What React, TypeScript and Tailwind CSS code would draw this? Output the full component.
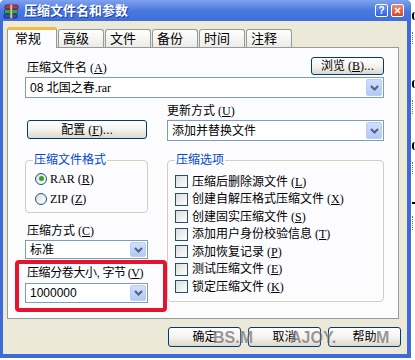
import type { ReactNode } from "react";

// mnemonic key like (A) with underlined letter
function Mn({ k, tight }: { k: string; tight?: boolean }) {
  return (
    <span className={`${tight ? "ml-[2px]" : "ml-[3px]"} font-['Liberation_Serif',serif]`}>
      (<u>{k}</u>)
    </span>
  );
}

function XpButton({ className, children }: { className?: string; children: ReactNode }) {
  return (
    <div
      className={`flex items-center justify-center rounded-[3px] border border-[#003c74] bg-gradient-to-b from-white via-[#f4f3ee] to-[#dcd8cc] text-[12px] leading-[14px] text-black ${className ?? ""}`}
    >
      {children}
    </div>
  );
}

function Combo({ className, children }: { className?: string; children: ReactNode }) {
  return (
    <div className={`flex items-center border border-[#7f9db9] bg-white p-px ${className ?? ""}`}>
      <div className="flex-1 truncate pl-[3px] text-[12px] leading-[14px]">{children}</div>
      <div className="flex h-full w-[16px] items-center justify-center rounded-[2px] border border-[#b9cdf6] bg-gradient-to-b from-[#d2defc] to-[#b4c8f5]">
        <svg width="9" height="6" viewBox="0 0 9 6">
          <path d="M1 1 L4.5 4.5 L8 1" fill="none" stroke="#4d6185" strokeWidth="2" />
        </svg>
      </div>
    </div>
  );
}

function Check({ children }: { children: ReactNode }) {
  return (
    <div className="flex h-[13px] items-center gap-[4px]">
      <div className="h-[13px] w-[13px] shrink-0 border border-[#1c5180] bg-gradient-to-br from-[#dcdcd7] to-white" />
      <span className="whitespace-nowrap text-[12px] leading-[14px]">{children}</span>
    </div>
  );
}

function Radio({ checked, children }: { checked?: boolean; children: ReactNode }) {
  return (
    <div className="flex h-[13px] items-center gap-[3px]">
      <div className="flex h-[12px] w-[12px] items-center justify-center rounded-full border border-[#1c5180] bg-gradient-to-br from-[#dcdcd7] to-white">
        {checked && <div className="h-[5px] w-[5px] rounded-full bg-[#2fa72f]" />}
      </div>
      <span className="whitespace-nowrap text-[12px] leading-[14px]">{children}</span>
    </div>
  );
}

function WinRarIcon() {
  return (
    <svg width="16" height="16" viewBox="0 0 16 16">
      <rect x="1" y="11" width="13" height="4" rx="1" fill="#2a52c8" stroke="#0c2270" strokeWidth="0.8" />
      <rect x="1.5" y="6.5" width="13" height="4" rx="1" fill="#2aa852" stroke="#0d5a23" strokeWidth="0.8" />
      <rect x="2" y="2" width="13" height="4" rx="1" fill="#b8327a" stroke="#5e1040" strokeWidth="0.8" />
      <rect x="7" y="1" width="2.5" height="14.5" fill="#d8c08a" stroke="#6d5a2e" strokeWidth="0.6" />
    </svg>
  );
}

const tabs = ["高级", "文件", "备份", "时间", "注释"];

const options: [string, string][] = [
  ["压缩后删除源文件", "L"],
  ["创建自解压格式压缩文件", "X"],
  ["创建固实压缩文件", "S"],
  ["添加用户身份校验信息", "T"],
  ["添加恢复记录", "P"],
  ["测试压缩文件", "E"],
  ["锁定压缩文件", "K"],
];

const watermark = "pointer-events-none absolute top-[330px] text-[16px] font-bold leading-[16px] text-[#707070] opacity-70 [text-shadow:0_0_2px_white]";

export default function App() {
  return (
    <div className="relative flex h-[360px] w-[415px] overflow-hidden bg-white font-['Liberation_Sans','Noto_Sans_CJK_SC',sans-serif] text-black">
      {/* dialog window */}
      <div className="flex h-[358px] w-[411px] shrink-0 flex-col rounded-t-[5px] bg-[#3e6bd8]">
        {/* title bar */}
        <div className="flex h-[21px] items-center rounded-t-[5px] bg-gradient-to-b from-[#7fa2ee] via-[#4a78e0] to-[#3f6ddb] pl-[3px] pr-[7px]">
          <WinRarIcon />
          <span className="ml-[5px] text-[13px] font-bold leading-[15px] text-white [text-shadow:1px_1px_0_#1c3f9c]">
            压缩文件名和参数
          </span>
          <div className="ml-auto flex gap-[3px]">
            <div className="flex h-[13px] w-[13px] items-center justify-center rounded-[2px] border border-white bg-gradient-to-b from-[#6b97f5] to-[#2e62dc] text-[10px] font-bold leading-none text-white">
              ?
            </div>
            <div className="flex h-[13px] w-[13px] items-center justify-center rounded-[2px] border border-white bg-gradient-to-b from-[#f08a68] to-[#d2452a]">
              <svg width="7" height="7" viewBox="0 0 7 7">
                <path d="M1 1 L6 6 M6 1 L1 6" stroke="white" strokeWidth="1.6" />
              </svg>
            </div>
          </div>
        </div>

        {/* body */}
        <div className="mb-[4px] ml-[3px] mr-[4px] flex flex-1 flex-col bg-[#ece9d8]">
          {/* tabs */}
          <div className="flex items-end pl-[4px] pt-[6px]">
            <div className="relative z-10 -mb-px h-[21px] w-[50px] rounded-t-[3px] border border-b-0 border-[#919b9c] border-t-[3px] border-t-[#f7b744] bg-[#fcfcfe] pl-[7px] pt-[1px] text-[13px] leading-[15px]">
              常规
            </div>
            {tabs.map((t) => (
              <div
                key={t}
                className="ml-[1px] h-[18px] w-[46px] rounded-t-[3px] border border-b-0 border-[#919b9c] bg-gradient-to-b from-white to-[#ecebe6] pl-[4px] pt-[1px] text-[13px] leading-[15px]"
              >
                {t}
              </div>
            ))}
          </div>

          {/* tab panel */}
          <div className="ml-[4px] mr-[8px] h-[272px] border border-[#919b9c] bg-[#fcfcfe] pl-[17px] pr-[14px] pt-[9px]">
            <div className="flex h-[18px] items-end justify-between">
              <span className="pl-[2px] text-[12px] leading-[14px]">
                压缩文件名<Mn k="A" />
              </span>
              <XpButton className="h-[18px] w-[73px]">
                浏览<Mn k="B" />...
              </XpButton>
            </div>
            <Combo className="mt-[2px] h-[21px]">
              08 北国之春<span className="font-['Liberation_Serif',serif]">.rar</span>
            </Combo>

            <div className="mt-[6px] grid grid-cols-[123px_217px] gap-x-[19px]">
              <div className="flex items-end pb-[2px]">
                <XpButton className="ml-[2px] h-[19px] w-[120px]">
                  配置<Mn k="F" />...
                </XpButton>
              </div>
              <div>
                <div className="h-[14px] text-[12px] leading-[14px]">
                  更新方式<Mn k="U" />
                </div>
                <Combo className="mt-[2px] h-[21px]">添加并替换文件</Combo>
              </div>
            </div>

            <div className="mt-[12px] grid grid-cols-[123px_217px] gap-x-[19px]">
              <div>
                <fieldset className="h-[60px] rounded-[4px] border border-[#d0d0bf] pl-[9px]">
                  <legend className="ml-[-2px] px-[1px] text-[12px] leading-[14px] text-[#0046d5]">
                    压缩文件格式
                  </legend>
                  <div className="mt-[5px] flex flex-col gap-[7px]">
                    <Radio checked>
                      <span className="font-['Liberation_Serif',serif]">RAR</span>
                      <Mn k="R" />
                    </Radio>
                    <Radio>
                      <span className="font-['Liberation_Serif',serif]">ZIP</span>
                      <Mn k="Z" />
                    </Radio>
                  </div>
                </fieldset>
                <div className="mt-[11px] pl-[2px] text-[12px] leading-[14px]">
                  压缩方式<Mn k="C" />
                </div>
                <Combo className="mt-[2px] h-[19px]">标准</Combo>
                <div className="mt-[7px] whitespace-nowrap pl-[2px] text-[12px] leading-[14px] tracking-[-0.4px]">
                  压缩分卷大小, 字节<Mn k="V" tight />
                </div>
                <Combo className="mt-[3px] h-[20px]">1000000</Combo>
              </div>
              <fieldset className="h-[149px] rounded-[4px] border border-[#d0d0bf] pl-[7px]">
                <legend className="px-[1px] text-[12px] leading-[14px] text-[#0046d5]">
                  压缩选项
                </legend>
                <div className="mt-[8px] flex flex-col gap-[4.5px]">
                  {options.map(([label, key]) => (
                    <Check key={key}>
                      {label}
                      <Mn k={key} />
                    </Check>
                  ))}
                </div>
              </fieldset>
            </div>
          </div>

          {/* dialog buttons */}
          <div className="mt-[8px] flex justify-end gap-[7px] pr-[6px]">
            <XpButton className="h-[20px] w-[73px]">确定</XpButton>
            <XpButton className="h-[20px] w-[73px]">取消</XpButton>
            <XpButton className="h-[20px] w-[73px]">帮助</XpButton>
          </div>
        </div>
      </div>

      {/* sliver of the window behind */}
      <div className="flex w-[4px] flex-col items-start pl-[1px] pt-[12px]">
        <div className="h-[8px] w-[3px] rounded-l-full border-l-2 border-black" />
        <div className="mt-[12px] h-[12px] w-[2px] border-l border-dotted border-gray-500" />
        <div className="mt-[36px] h-[8px] w-[3px] rounded-l-full border-l-2 border-black" />
        <div className="mt-[12px] h-[14px] w-[2px] border-l border-dotted border-gray-500" />
        <div className="mt-[28px] h-[8px] w-[3px] rounded-l-full border-l-2 border-black" />
        <div className="mt-[12px] h-[12px] w-[2px] border-l border-dotted border-gray-500" />
        <div className="mt-[28px] h-[2px] w-[3px] bg-black" />
        <div className="mt-[12px] h-[14px] w-[2px] border-l border-dotted border-gray-500" />
      </div>

      {/* red annotation box */}
      <div className="absolute left-[15px] top-[260px] h-[52px] w-[152px] rounded-[4px] border-[4px] border-[#e3142d]" />

      {/* watermark */}
      <div className={`${watermark} left-[213px]`}>BS.M</div>
      <div className={`${watermark} left-[290px]`}>AJOY.</div>
      <div className={`${watermark} left-[376px]`}>M</div>
    </div>
  );
}
